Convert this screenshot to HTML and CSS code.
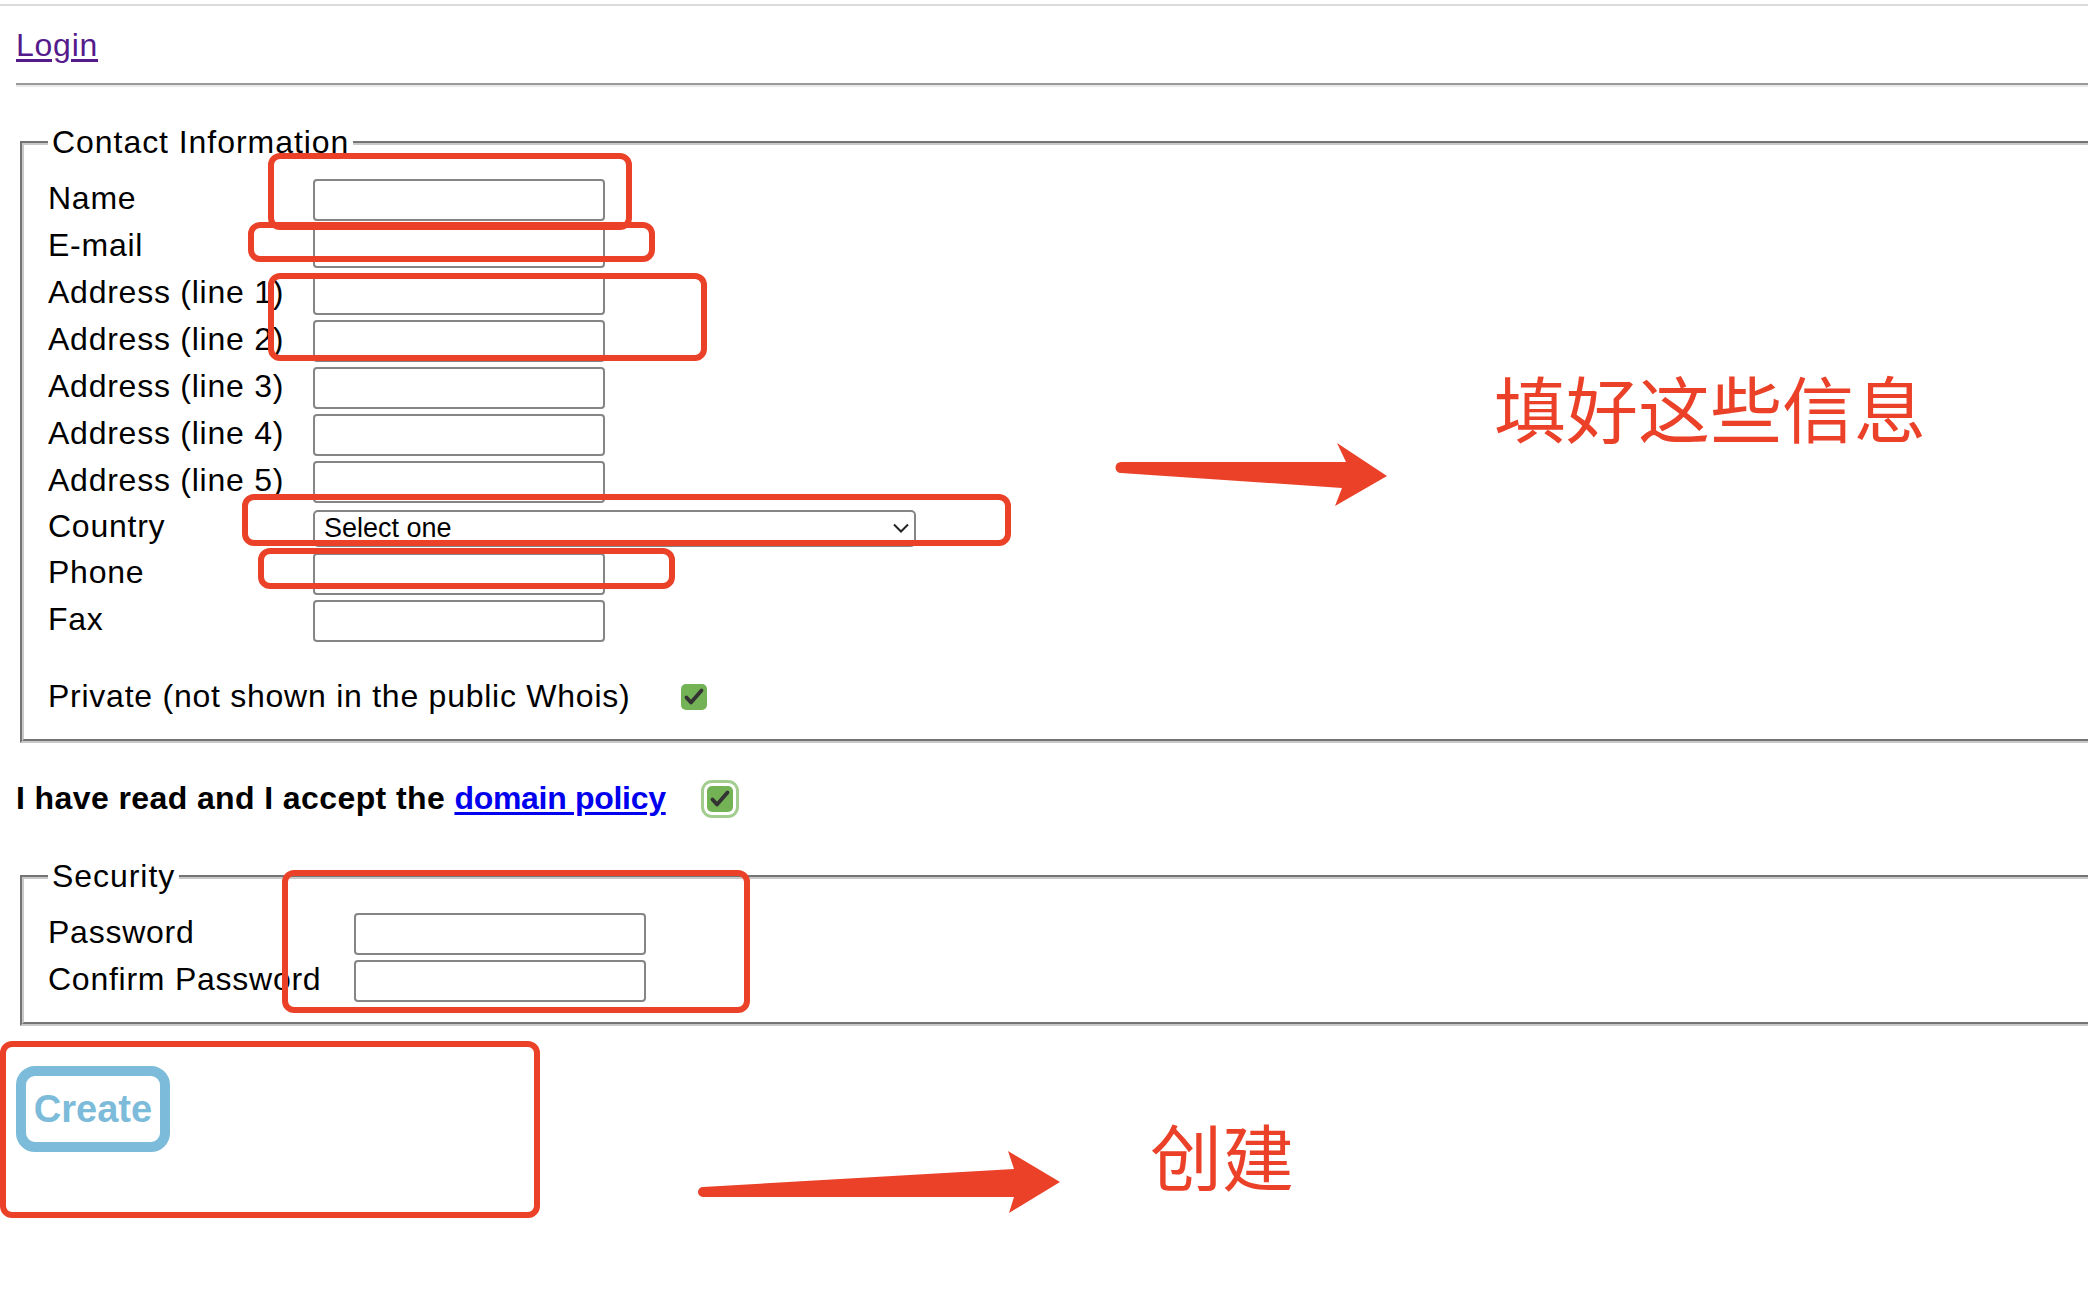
FILE: index.html
```html
<!DOCTYPE html>
<html lang="en">
<head>
<meta charset="utf-8">
<title>Create domain contact</title>
<link rel="stylesheet" href="styles.css">
</head>
<body>
<div class="topline"></div>
<main class="page">
  <nav class="nav"><a href="#" class="login">Login</a></nav>
  <hr class="rule">
  <form class="form" onsubmit="return false">
    <fieldset class="box contact">
      <legend>Contact Information</legend>
      <div class="grid contact-grid">
        <label class="lbl">Name</label><input class="field" type="text">
        <label class="lbl">E-mail</label><input class="field" type="text">
        <label class="lbl">Address (line 1)</label><input class="field" type="text">
        <label class="lbl">Address (line 2)</label><input class="field" type="text">
        <label class="lbl">Address (line 3)</label><input class="field" type="text">
        <label class="lbl">Address (line 4)</label><input class="field" type="text">
        <label class="lbl">Address (line 5)</label><input class="field" type="text">
        <label class="lbl">Country</label><select class="picker"><option>Select one</option></select>
        <label class="lbl">Phone</label><input class="field" type="text">
        <label class="lbl">Fax</label><input class="field" type="text">
      </div>
      <div class="private"><span>Private (not shown in the public Whois)</span><input class="check private-check" type="checkbox" checked></div>
    </fieldset>

    <div class="policy"><span class="policy-text">I have read and I accept the <a href="#" class="policy-link">domain policy</a></span><input class="check focus" type="checkbox" checked></div>

    <fieldset class="box security">
      <legend>Security</legend>
      <div class="grid security-grid">
        <label class="lbl">Password</label><input class="field" type="password">
        <label class="lbl">Confirm Password</label><input class="field" type="password">
      </div>
    </fieldset>

    <button class="create" type="submit">Create</button>
  </form>
</main>

<svg class="marks" width="2088" height="1298" viewBox="0 0 2088 1298" aria-hidden="true">
  <g fill="none" stroke="#ea4128" stroke-width="6">
    <rect x="271" y="156" width="358" height="71" rx="9"/>
    <rect x="251" y="225" width="401" height="34" rx="9"/>
    <rect x="271" y="276" width="433" height="82" rx="9"/>
    <rect x="245" y="497" width="763" height="46" rx="9"/>
    <rect x="261" y="551" width="411" height="35" rx="9"/>
    <rect x="285" y="873" width="462" height="137" rx="9"/>
    <rect x="3" y="1044" width="534" height="171" rx="9"/>
  </g>
  <g fill="#ea4128">
    <path d="M1121 462 L1346 462 L1337 443 L1387 476 L1335 506 L1342 488 L1121 473 A5.5 5.5 0 0 1 1121 462 Z"/>
    <path d="M703 1187 L1014 1169 L1008 1151 L1060 1182 L1009 1213 L1014 1197 L703 1197 A5 5 0 0 1 703 1187 Z"/>
  </g>
</svg>
<div class="note note-fill">填好这些信息</div>
<div class="note note-create">创建</div>
</body>
</html>
```

FILE: styles.css
```css
html, body {
  margin: 0;
  padding: 0;
  background: #ffffff;
  overflow: hidden;
}

body {
  position: relative;
  width: 2088px;
  height: 1298px;
  font-family: "Liberation Sans", Arial, Helvetica, sans-serif;
  font-size: 32px;
  line-height: 37px;
  letter-spacing: 0.75px;
  color: #000000;
}

.topline {
  margin-top: 4px;
  height: 2px;
  background: #dadada;
}

.page {
  padding-left: 16px;
}

.nav {
  padding-top: 21px;
  height: 37px;
}

.login {
  color: #551a8b;
  text-decoration: underline;
  text-underline-offset: 3px;
  text-decoration-thickness: 3px;
}

.rule {
  margin: 19px 0 0 0;
  height: 0;
  border: 0;
  border-top: 2px solid #9a9a9a;
  border-bottom: 2px solid #e9e9e9;
}

.form {
  margin: 0;
}

.box {
  margin: 37px -40px 0 4px;
  padding: 18px 24px 24px 24px;
  border: 4px groove #c8c8c8;
  min-width: 0;
}

.box legend {
  padding: 0 4px;
  line-height: 37px;
  letter-spacing: 0.95px;
}

.grid {
  display: grid;
  row-gap: 5px;
  grid-auto-rows: 42px;
  align-items: center;
}

.contact-grid {
  grid-template-columns: 265px 1fr;
  grid-template-rows: repeat(7, 42px) 40px 42px 42px;
}

.security-grid {
  grid-template-columns: 306px 1fr;
}

.lbl {
  line-height: 37px;
  white-space: nowrap;
  padding-bottom: 3px;
}

.field {
  box-sizing: border-box;
  width: 292px;
  height: 42px;
  margin: 0;
  border: 2px solid #858585;
  border-radius: 4px;
  background: #ffffff;
  font: inherit;
}

.picker {
  -webkit-appearance: none;
  appearance: none;
  box-sizing: border-box;
  width: 603px;
  height: 37px;
  margin: 0;
  padding: 0 0 0 9px;
  border: 2px solid #858585;
  border-radius: 5px;
  font-family: "Liberation Sans", Arial, sans-serif;
  font-size: 27px;
  letter-spacing: 0;
  color: #000000;
  background: #ffffff url("data:image/svg+xml,%3Csvg xmlns='http://www.w3.org/2000/svg' width='16' height='10' viewBox='0 0 16 10'%3E%3Cpath d='M1 1.5 L8 8.5 L15 1.5' fill='none' stroke='%23222' stroke-width='2'/%3E%3C/svg%3E") no-repeat right 5px center;
}

.private {
  margin-top: 36px;
  display: flex;
  align-items: center;
  height: 37px;
}

.private-check {
  margin-left: 51px;
}

.check {
  -webkit-appearance: none;
  appearance: none;
  flex: none;
  width: 26px;
  height: 26px;
  margin-top: 0;
  margin-bottom: 0;
  border: 0;
  border-radius: 5px;
  background: #73b356 url("data:image/svg+xml,%3Csvg xmlns='http://www.w3.org/2000/svg' width='26' height='26' viewBox='0 0 26 26'%3E%3Cpath d='M5.5 13.5 L10 18.5 L20.5 6.5' fill='none' stroke='%23333' stroke-width='3.8' stroke-linecap='round' stroke-linejoin='round'/%3E%3C/svg%3E") center / 26px 26px no-repeat;
}

.policy {
  margin-top: 37px;
  display: flex;
  align-items: center;
  height: 37px;
}

.policy-text {
  font-weight: 700;
  letter-spacing: 0.4px;
  white-space: nowrap;
}

.policy-link {
  color: #0000ee;
  letter-spacing: -0.3px;
  text-decoration: underline;
  text-underline-offset: 3px;
  text-decoration-thickness: 3px;
}

.check.focus {
  margin-left: 41px;
  box-shadow: 0 0 0 3px #ffffff, 0 0 0 6px #a2cd8e;
}

.security {
  margin-top: 41px;
  padding-bottom: 20px;
}

.create {
  display: block;
  margin: 40px 0 0 0;
  box-sizing: border-box;
  width: 154px;
  height: 86px;
  padding: 0;
  border: 10px solid #7cbbd9;
  border-radius: 19px;
  background: #ffffff;
  color: #7cbbd9;
  font-family: "Liberation Sans", Arial, sans-serif;
  font-size: 38px;
  font-weight: 700;
  letter-spacing: 0;
  line-height: 1;
  cursor: pointer;
}

.marks {
  position: absolute;
  left: 0;
  top: 0;
  pointer-events: none;
}

.note {
  position: absolute;
  font-family: "Noto Sans CJK SC", "Noto Sans CJK JP", sans-serif;
  font-size: 72px;
  line-height: 1;
  letter-spacing: 0;
  color: #ea4128;
  white-space: nowrap;
}

.note-fill {
  left: 1494px;
  top: 370px;
}

.note-create {
  left: 1150px;
  top: 1118px;
}
```
